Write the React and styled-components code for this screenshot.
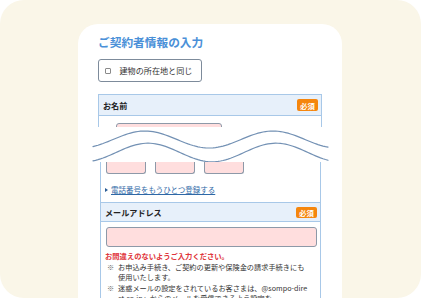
import React from "react";
import styled, { createGlobalStyle } from "styled-components";

const Global = createGlobalStyle`
  html, body { margin: 0; padding: 0; background: #ffffff; }
  body { font-family: "Noto Sans CJK JP", "Noto Sans", sans-serif; }
  * { box-sizing: border-box; }
`;

const Frame = styled.div`
  width: 421px;
  height: 298px;
  border-radius: 24px;
  background: #faf6e8;
  overflow: hidden;
  padding: 24px 0 0 78px;
`;

const Card = styled.div`
  width: 264px;
  min-height: 300px;
  background: #ffffff;
  border-radius: 20px 20px 0 0;
  padding: 10px 20px 0;
  display: flex;
  flex-direction: column;
`;

const Title = styled.h1`
  margin: 0;
  font-size: 11.7px;
  line-height: 16px;
  font-weight: 700;
  color: #4a90d8;
`;

const SameButton = styled.label`
  margin-top: 9px;
  align-self: flex-start;
  width: 104px;
  height: 23px;
  border: 1.5px solid #7d8b9b;
  border-radius: 3px;
  display: flex;
  align-items: center;
  padding-left: 6px;
  gap: 8.5px;
  font-size: 8.1px;
  color: #333;
`;

const Check = styled.span`
  width: 6px;
  height: 6px;
  border: 1px solid #8a8a8a;
  border-radius: 1px;
  background: #fff;
`;

const TopFragment = styled.section`
  margin-top: 12px;
  height: 33px;
  overflow: hidden;
  border: 1px solid #a8c8e8;
  border-bottom: none;
`;

const SectionHeader = styled.div`
  height: ${(p) => p.$h}px;
  background: #e7f0fa;
  border-bottom: 1px solid #a8c8e8;
  border-top: ${(p) => (p.$top ? "1px solid #a8c8e8" : "none")};
  display: flex;
  align-items: center;
  justify-content: space-between;
  padding: 0 3px 0 4px;
  font-size: 8.1px;
  font-weight: 700;
  color: #222;
  box-sizing: content-box;
`;

const Badge = styled.span`
  width: 21px;
  height: ${(p) => p.$h}px;
  background: #f5860d;
  color: #fff;
  border-radius: 2px;
  font-size: 7.4px;
  font-weight: 700;
  display: flex;
  align-items: center;
  justify-content: center;
`;

const PinkInput = styled.div`
  flex-shrink: 0;
  width: ${(p) => p.$w}px;
  height: ${(p) => p.$h}px;
  background: #ffdede;
  border: 1.5px solid #8d99a8;
  border-radius: 3px;
  margin: ${(p) => p.$m || "0"};
  ${(p) => (p.$cut ? "border-top: none; border-radius: 0 0 3px 3px;" : "")}
`;

const WaveSvg = styled.svg`
  display: block;
  width: 235px;
  height: 35px;
  margin-left: -5px;
  overflow: visible;
`;

const BottomFragment = styled.section`
  margin: 0 1px 0 2px;
  border-left: 1px solid #a8c8e8;
  border-right: 1px solid #a8c8e8;
  display: flex;
  flex-direction: column;
`;

const PhoneRow = styled.div`
  display: flex;
  gap: 9.5px;
  padding-left: 5px;
`;

const LinkRow = styled.div`
  height: 28px;
  padding: 2px 0 0 4px;
  display: flex;
  align-items: center;
  gap: 3px;
  font-size: 7.5px;
`;

const Bullet = styled.span`
  width: 0;
  height: 0;
  border-left: 3px solid #2b5d96;
  border-top: 2px solid transparent;
  border-bottom: 2px solid transparent;
  margin-top: 2px;
`;

const Link = styled.a`
  color: #2e68a6;
  text-decoration: underline;
  line-height: 11px;
`;

const EmailBody = styled.div`
  padding: 5px 3px 0 5px;
  display: flex;
  flex-direction: column;
`;

const Warning = styled.p`
  margin: 3.5px 0 0 -1px;
  font-size: 7.3px;
  line-height: 11px;
  font-weight: 700;
  color: #e0353a;
`;

const Note = styled.div`
  display: flex;
  margin-top: 0.4px;
  font-size: 7.2px;
  line-height: 10.3px;
  color: #333;
  white-space: nowrap;
`;

const Mark = styled.span`
  flex-shrink: 0;
  width: 11px;
  margin-left: 1px;
  color: #666;
`;

const NoteText = styled.span`
  flex-shrink: 0;
`;

function wave(center, amp, phaseX) {
  const pts = [];
  for (let X = 0; X <= 235; X += 2.5) {
    const y = center - amp * Math.cos((2 * Math.PI * (X - phaseX)) / 128);
    pts.push(`${X.toFixed(1)},${y.toFixed(2)}`);
  }
  return "M" + pts.join(" L");
}

export default function App() {
  return (
    <>
      <Global />
      <Frame>
        <Card>
          <Title>ご契約者情報の入力</Title>
          <SameButton>
            <Check />
            建物の所在地と同じ
          </SameButton>
          <TopFragment>
            <SectionHeader $h={20}>
              お名前
              <Badge $h={12}>必須</Badge>
            </SectionHeader>
            <PinkInput $w={106} $h={20} $m="7px 0 0 17px" />
          </TopFragment>
          <WaveSvg viewBox="0 0 235 35">
            <path d={wave(12.5, 8.5, 52)} fill="none" stroke="#7391b4" strokeWidth="1.2" strokeLinecap="round" />
            <path d={wave(25.5, 9.3, 55)} fill="none" stroke="#7391b4" strokeWidth="1.2" strokeLinecap="round" />
          </WaveSvg>
          <BottomFragment>
            <PhoneRow>
              <PinkInput $w={39.5} $h={12} $cut />
              <PinkInput $w={39.5} $h={12} $cut />
              <PinkInput $w={39.5} $h={12} $cut />
            </PhoneRow>
            <LinkRow>
              <Bullet />
              <Link>電話番号をもうひとつ登録する</Link>
            </LinkRow>
            <SectionHeader $h={18} $top>
              メールアドレス
              <Badge $h={11}>必須</Badge>
            </SectionHeader>
            <EmailBody>
              <PinkInput $w={211} $h={20} />
              <Warning>お間違えのないようご入力ください。</Warning>
              <Note>
                <Mark>※</Mark>
                <NoteText>
                  お申込み手続き、ご契約の更新や保険金の請求手続きにも
                  <br />
                  使用いたします。
                </NoteText>
              </Note>
              <Note>
                <Mark>※</Mark>
                <NoteText>
                  迷惑メールの設定をされているお客さまは、@sompo-dire
                  <br />
                  ct.co.jp」からのメールを受信できるよう設定を
                </NoteText>
              </Note>
            </EmailBody>
          </BottomFragment>
        </Card>
      </Frame>
    </>
  );
}
